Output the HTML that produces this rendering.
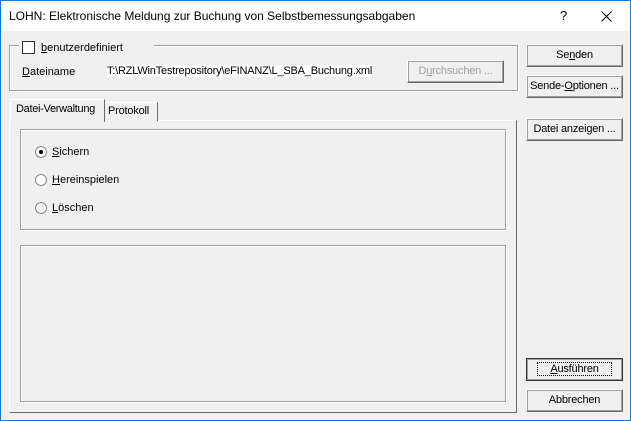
<!DOCTYPE html><html><head><style>
body{margin:0;width:631px;height:421px;overflow:hidden;font:11px "Liberation Sans",sans-serif;color:#000}
.w{position:absolute;left:0;top:0;width:629px;height:419px;border:1px solid #1979ca;background:#f0f0f0}
.t{position:absolute;left:0;top:0;width:629px;height:30px;background:#fff;font-size:12px}
.a{position:absolute;white-space:nowrap}
.btn{position:absolute;width:95px;height:21px;border:1px solid;border-color:#fff #696969 #696969 #fff;box-shadow:1px 1px 0 #a0a0a0 inset,-1px -1px 0 #a0a0a0 inset;background:#f0f0f0;text-align:center;line-height:21px;box-sizing:content-box;letter-spacing:-0.2px}
.g{position:absolute;border:1px solid #a0a0a0;box-shadow:1px 1px 0 #fff, inset 1px 1px 0 #fff}
.r{position:absolute;width:10px;height:10px;border-radius:50%;background:#fff;border:1px solid #888}
u{text-decoration:underline}
</style></head><body><div class="w">
<div class="t"><span class="a" style="left:8px;top:8px">LOHN: Elektronische Meldung zur Buchung von Selbstbemessungsabgaben</span><span class="a" style="left:559px;top:7px;font-size:13px">?</span>
<svg class="a" style="left:600px;top:10px" width="11" height="11"><path d="M0.5 0.5L10.5 10.5M10.5 0.5L0.5 10.5" stroke="#000" stroke-width="1"/></svg></div>
<div class="g" style="left:8px;top:44px;width:507px;height:44px"></div>
<div class="a" style="left:18px;top:38px;width:135px;height:14px;background:#f0f0f0"></div>
<div class="a" style="left:21px;top:40px;width:11px;height:11px;background:#fff;border:1px solid #333"></div>
<span class="a" style="left:40px;top:41px"><u>b</u>enutzerdefiniert</span>
<span class="a" style="left:21px;top:65px"><u>D</u>ateiname</span>
<span class="a" style="left:106px;top:64px;background:#fff;letter-spacing:-0.2px">T:\RZLWinTestrepository\eFINANZ\L_SBA_Buchung.xml</span>
<div class="btn" style="left:406px;top:59px;color:#a0a0a0;width:95px">D<u>u</u>rchsuchen ...</div>
<div class="btn" style="left:525px;top:43px">Se<u>n</u>den</div>
<div class="btn" style="left:525px;top:74px">Sende-<u>O</u>ptionen ...</div>
<div class="btn" style="left:525px;top:117px">Datei anzeigen ...</div>
<div class="btn" style="left:525px;top:357px;border-color:#333"><span style="outline:1px dotted #000;padding:0 12px"><u>A</u>usführen</span></div>
<div class="btn" style="left:525px;top:388px">Abbrechen</div>
<div class="a" style="left:8px;top:119px;width:506px;height:291px;border:1px solid #fff;border-right-color:#696969;border-bottom-color:#696969"></div>
<div class="a" style="left:103px;top:101px;width:52px;height:18px;border:1px solid #fff;border-right-color:#696969;border-bottom:none;background:#f0f0f0"></div>
<span class="a" style="left:107px;top:104px;letter-spacing:-0.2px">Protokoll</span>
<div class="a" style="left:9px;top:98px;width:93px;height:22px;border:1px solid #fff;border-right-color:#696969;border-bottom:none;background:#f0f0f0"></div>
<span class="a" style="left:15px;top:102px;letter-spacing:-0.3px">Datei-Verwaltung</span>
<div class="g" style="left:19px;top:128px;width:484px;height:99px"></div>
<div class="r" style="left:34px;top:145px"><div style="position:absolute;left:3px;top:3px;width:4px;height:4px;border-radius:50%;background:#000"></div></div>
<span class="a" style="left:51px;top:145px"><u>S</u>ichern</span>
<div class="r" style="left:34px;top:173px"></div>
<span class="a" style="left:51px;top:173px"><u>H</u>ereinspielen</span>
<div class="r" style="left:34px;top:201px"></div>
<span class="a" style="left:51px;top:201px"><u>L</u>öschen</span>
<div class="g" style="left:19px;top:244px;width:484px;height:155px"></div>
</div></body></html>
